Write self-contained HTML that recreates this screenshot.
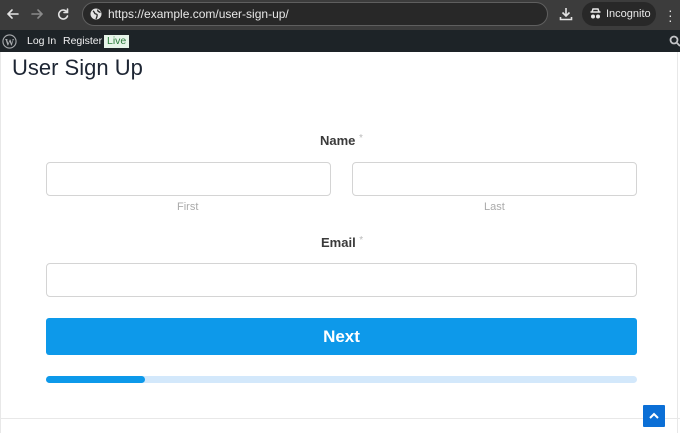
<!DOCTYPE html>
<html><head><meta charset="utf-8"><style>
*{box-sizing:border-box;margin:0;padding:0}
body{width:680px;height:433px;overflow:hidden;background:#fff;font-family:"Liberation Sans",sans-serif;position:relative}
.chrome{position:absolute;left:0;top:0;width:680px;height:30px;background:#3c3c3c}
.url{position:absolute;left:82px;top:2px;width:466px;height:24px;border:1px solid #5f5f5f;border-radius:12px;background:#282828;color:#e8e8e8;font-size:12px;line-height:22px;padding-left:25px}
.inc{position:absolute;left:582px;top:2px;width:74px;height:24px;border-radius:12px;background:#282828;color:#e8e8e8;font-size:11px;line-height:24px;padding-left:24px}
.admin{position:absolute;left:0;top:30px;width:680px;height:22px;background:#1d2327;color:#f0f0f1;font-size:10.5px;line-height:23px}
.admin span{position:absolute;top:0}
.live{background:#e6f4e9;color:#2a7a3a;line-height:13px;top:5px!important;padding:0 3px}
h1{position:absolute;left:12px;top:55px;font-size:22px;font-weight:normal;color:#1d2533}
.lbl{position:absolute;font-size:13px;font-weight:bold;color:#3a3a3a}
.lbl i{color:#bbb;font-style:normal;font-weight:normal;font-size:10px;vertical-align:top}
.in{position:absolute;border:1px solid #d4d4d4;border-radius:4px;height:34px;background:#fff}
.sub{position:absolute;font-size:11px;color:#aaa}
.btn{position:absolute;left:46px;top:318px;width:591px;height:37px;background:#0d99ea;border-radius:3px;color:#fff;font-weight:bold;font-size:17px;text-align:center;line-height:37px}
.bar{position:absolute;left:46px;top:376px;width:591px;height:7px;background:#d3e8fb;border-radius:4px}
.bar div{width:99px;height:7px;background:#0d99ea;border-radius:4px}
</style></head><body>
<div class="chrome">
<svg width="80" height="30" style="position:absolute;left:0;top:0" fill="none" stroke-width="1.6" stroke-linecap="round">
<path d="M18 14H8M12 10l-4 4 4 4" stroke="#e3e3e3"/>
<path d="M32 14h10M38 10l4 4-4 4" stroke="#8a8a8a"/>
<path d="M67 12a4.5 4.5 0 1 0 0.5 4M67.5 9v3.5H64" stroke="#e3e3e3"/>
</svg>
<div class="url"><svg width="12" height="12" style="position:absolute;left:7px;top:5px" viewBox="0 0 12 12"><circle cx="6" cy="6" r="5.5" fill="#e3e3e3"/><path d="M3 3c2 1 1 3 3 3s1 3 0 5M8 1.5c-1 2 1 2 2.5 3" stroke="#282828" stroke-width="1.3" fill="none"/></svg>https://example.com/user-sign-up/</div>
<svg width="14" height="14" style="position:absolute;left:559px;top:7px" fill="none" stroke="#e3e3e3" stroke-width="1.6"><path d="M7 1v8M3.5 5.5L7 9l3.5-3.5M1.5 10v2.5h11V10"/></svg>
<div class="inc"><svg width="13" height="12" style="position:absolute;left:7px;top:6px" viewBox="0 0 13 12"><path d="M3 4L4 1h5l1 3H1.5h10" stroke="#e8e8e8" stroke-width="1.5" fill="none"/><circle cx="4" cy="8.5" r="2" fill="#e8e8e8"/><circle cx="9" cy="8.5" r="2" fill="#e8e8e8"/></svg>Incognito</div>
<div style="position:absolute;left:668px;top:8px;width:3px;color:#e3e3e3;font-size:14px;line-height:5px">·<br>·<br>·</div>
</div>
<div class="admin">
<svg width="15" height="15" style="position:absolute;left:2px;top:4px" viewBox="0 0 16 16"><circle cx="8" cy="8" r="7" fill="none" stroke="#a7aaad" stroke-width="1.2"/><text x="8" y="12" font-size="10" font-family="Liberation Serif" font-weight="bold" fill="#a7aaad" text-anchor="middle">W</text></svg>
<span style="left:27px">Log In</span><span style="left:63px">Register</span><span class="live" style="left:104px">Live</span>
<svg width="12" height="12" style="position:absolute;left:669px;top:5px" fill="none" stroke="#c3c4c7" stroke-width="1.8"><circle cx="5" cy="5" r="3.5"/><path d="M7.5 7.5L11 11"/></svg>
</div>
<div style="position:absolute;left:0;top:52px;width:1px;height:381px;background:#e8e8e8"></div>
<div style="position:absolute;left:677px;top:52px;width:1px;height:381px;background:#e8e8e8"></div>
<h1>User Sign Up</h1>
<div class="lbl" style="left:320px;top:133px">Name <i>*</i></div>
<div class="in" style="left:46px;top:162px;width:285px"></div>
<div class="in" style="left:352px;top:162px;width:285px"></div>
<div class="sub" style="left:177px;top:201px">First</div>
<div class="sub" style="left:484px;top:201px">Last</div>
<div class="lbl" style="left:321px;top:235px">Email <i>*</i></div>
<div class="in" style="left:46px;top:263px;width:591px"></div>
<div class="btn">Next</div>
<div class="bar"><div></div></div>
<div style="position:absolute;left:0;top:418px;width:680px;height:1px;background:#e8e8e8"></div>
<div style="position:absolute;left:643px;top:405px;width:22px;height:22px;background:#0b6fd6;border-radius:1px"><svg width="22" height="22" fill="none" stroke="#fff" stroke-width="2"><path d="M7 13l4-4 4 4"/></svg></div>
</body></html>
